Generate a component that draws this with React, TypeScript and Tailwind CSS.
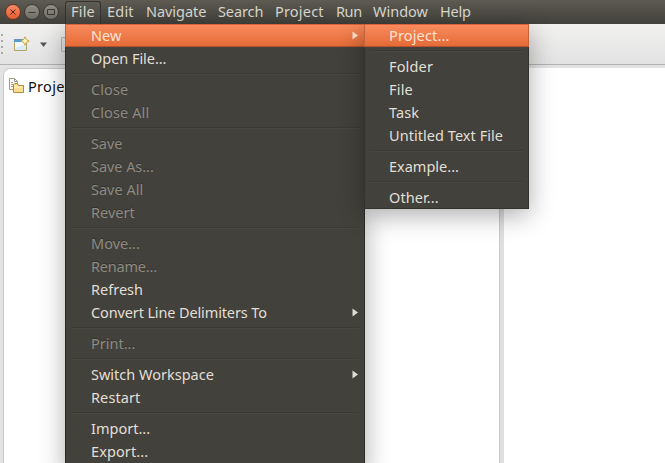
import { ReactNode } from "react";

type Entry = { label: string; tracking?: string; disabled?: boolean; arrow?: boolean; active?: boolean } | null;

const bar = [
  { label: "File", width: "w-9", tracking: "tracking-[0.2px]", open: true },
  { label: "Edit", width: "w-[39px]", tracking: "tracking-[0.2px]" },
  { label: "Navigate", width: "w-[72px]", tracking: "tracking-[-0.05px]" },
  { label: "Search", width: "w-[57px]", tracking: "tracking-[-0.1px]" },
  { label: "Project", width: "w-[61px]", tracking: "tracking-[0.2px]" },
  { label: "Run", width: "w-[37px]", tracking: "tracking-[-0.4px]" },
  { label: "Window", width: "w-[67px]", tracking: "tracking-[0px]" },
  { label: "Help", width: "w-[42px]", tracking: "tracking-[-0.2px]" },
];

const fileMenu: Entry[] = [
  { label: "New", active: true, arrow: true },
  { label: "Open File...", tracking: "tracking-[-0.05px]" },
  null,
  { label: "Close", disabled: true, tracking: "tracking-[0.1px]" },
  { label: "Close All", disabled: true, tracking: "tracking-[0.1px]" },
  null,
  { label: "Save", disabled: true, tracking: "tracking-[-0.1px]" },
  { label: "Save As...", disabled: true, tracking: "tracking-[-0.05px]" },
  { label: "Save All", disabled: true },
  { label: "Revert", disabled: true },
  null,
  { label: "Move...", disabled: true },
  { label: "Rename...", disabled: true, tracking: "tracking-[-0.2px]" },
  { label: "Refresh" },
  { label: "Convert Line Delimiters To", arrow: true, tracking: "tracking-[-0.13px]" },
  null,
  { label: "Print...", disabled: true },
  null,
  { label: "Switch Workspace", arrow: true },
  { label: "Restart", tracking: "tracking-[0.1px]" },
  null,
  { label: "Import..." },
  { label: "Export...", tracking: "tracking-[0.1px]" },
];

const newMenu: Entry[] = [
  { label: "Project...", active: true, tracking: "tracking-[0.15px]" },
  null,
  { label: "Folder", tracking: "tracking-[0.15px]" },
  { label: "File", tracking: "tracking-[0.2px]" },
  { label: "Task", tracking: "tracking-[0.1px]" },
  { label: "Untitled Text File", tracking: "tracking-[0.05px]" },
  null,
  { label: "Example..." },
  null,
  { label: "Other...", tracking: "tracking-[0.1px]" },
];

function Menu({ entries, inset }: { entries: Entry[]; inset: string }) {
  return (
    <>
      {entries.map((e, i) =>
        e === null ? (
          <div key={i} className="h-2 px-[5px] pt-[3px]">
            <div className="h-[2px] border-t border-b border-t-[#3b3a35] border-b-[#484741]" />
          </div>
        ) : (
          <div
            key={i}
            className={`flex h-[23px] items-center justify-between pr-1.5 ${inset} ${
              e.active
                ? "border-t border-b border-t-[#d9623a] border-b-[#b4532d] bg-linear-to-b from-[#f88b5d] to-[#e56b36] text-[#fbe3d3] shadow-[-1px_0_0_#c4623c,1px_0_0_#c4623c]"
                : e.disabled
                  ? "text-[#8d8b83] [text-shadow:0_-1px_0_#32312c]"
                  : "text-[#e2dfd6]"
            }`}
          >
            <span className={`whitespace-nowrap ${e.tracking ?? ""}`}>{e.label}</span>
            {e.arrow && (
              <svg width="6" height="9" viewBox="0 0 6 9">
                <path d="M0.5 0.5 6 4.5 0.5 8.5Z" fill={e.active ? "#fbe3d3" : "#dedcd4"} />
              </svg>
            )}
          </div>
        ),
      )}
    </>
  );
}

function WindowButton({ close, children }: { close?: boolean; children: ReactNode }) {
  return (
    <div
      className={`flex size-4 items-center justify-center rounded-full border ${
        close
          ? "border-[#6b3523] bg-linear-to-b from-[#f58a66] to-[#e25c30]"
          : "border-[#3b3a35] bg-linear-to-b from-[#908e85] to-[#716f67]"
      }`}
    >
      <svg className="shrink-0" width="14" height="14" viewBox="0 0 14 14" fill="none" stroke={close ? "#5a2213" : "#393832"} strokeWidth="1">
        {children}
      </svg>
    </div>
  );
}

export default function App() {
  return (
    <div className="relative flex h-[463px] w-[665px] flex-col overflow-hidden bg-[#e3e3e3] font-['Noto_Sans','Open_Sans',sans-serif] text-[14.5px] leading-none">
      <header className="flex h-6 shrink-0 bg-linear-to-b from-[#5d5b52] to-[#42413b] text-[#dcd9cf]">
        <div className="flex w-[65px] items-center gap-[3px] pb-px pl-[5px]">
          <WindowButton close>
            <path d="m4.5 4.5 5 5m0-5-5 5" />
          </WindowButton>
          <WindowButton>
            <path d="M3.5 7.5h7" />
          </WindowButton>
          <WindowButton>
            <path d="M3.5 4.5h7v5h-7z" />
          </WindowButton>
        </div>
        {bar.map((b) => (
          <div
            key={b.label}
            className={`flex items-center whitespace-nowrap ${b.width} ${b.tracking} ${
              b.open
                ? "mt-px h-[23px] rounded-t-[3px] border border-b-0 border-[#34332e] bg-linear-to-b from-[#5f5d54] to-[#474640] pb-[3px] pl-[5px]"
                : "pb-px pl-1.5"
            }`}
          >
            {b.label}
          </div>
        ))}
      </header>

      <div className="flex h-[41px] shrink-0 items-center border-b border-[#b3b3b3] bg-linear-to-b from-[#f2f1f0] to-[#e2e2e2]">
        <div className="ml-px flex h-[22px] w-1.5 flex-col justify-between py-px">
          {[0, 1, 2, 3].map((n) => (
            <i key={n} className="size-0.5 bg-[#aaa9a6]" />
          ))}
        </div>
        <svg className="ml-[6px]" width="17" height="17" viewBox="0 0 17 17">
          <path d="M1.5 4.5h12v10h-12z" fill="#f1f8fb" stroke="#b5a36c" />
          <path d="M1 3h10v1H1z" fill="#6f93b5" />
          <path d="M1 4h10v2H1z" fill="#4f9fd6" />
          <path d="M2 14v-2l8-3h3v5z" fill="#d9ecf5" />
          <path d="M12 .8 13.4 3.6 16.2 5l-2.8 1.4L12 9.2l-1.4-2.8L7.8 5l2.8-1.4z" fill="#fdf3b8" stroke="#c6a748" strokeWidth="1" />
        </svg>
        <svg className="ml-[10px]" width="7" height="5" viewBox="0 0 7 5">
          <path d="M0 .5h7L3.5 5z" fill="#565656" />
        </svg>
        <div className="ml-[14px] h-[15px] w-4 rounded-[1px] border border-[#b3b7be] bg-[#e3e5e8]" />
      </div>

      <main className="flex min-h-0 flex-1 pl-[3px] pt-[3px]">
        <section className="w-[497px] rounded-tl-[7px] border-l border-t border-r border-[#c9c9c9] bg-white">
          <div className="flex items-center gap-[3px] pl-[5px] pt-[9px] text-[#111]">
            <svg width="16" height="16" viewBox="0 0 16 16">
              <path d="M.5.5h5l3 3v8h-8z" fill="#fffdf2" stroke="#a8986c" />
              <path d="M5.5.5v3h3M2 4.5h2M2 6.5h4M2 8.5h3" fill="none" stroke="#8e9aa8" />
              <path d="M4.5 14.5v-8l1-1h3l1 2h5v7z" fill="#f7df92" stroke="#b08a3a" />
              <path d="M5.5 9h8" stroke="#fff3c4" />
            </svg>
            <span className="whitespace-nowrap tracking-[0.3px]">Proje</span>
          </div>
        </section>
        <div className="w-1 bg-[#dfdfdf]" />
        <section className="flex-1 bg-white" />
      </main>

      <nav className="absolute left-[65px] top-6 h-[450px] w-[300px] border-l border-r border-[#2c2b27] bg-[#42413b] shadow-[0_6px_24px_rgba(0,0,0,0.33)]">
        <Menu entries={fileMenu} inset="pl-[25px]" />
      </nav>
      <nav className="absolute left-[364px] top-6 h-[185px] w-[165px] border-l border-r border-b border-[#33322d] bg-[#42413b] shadow-[0_6px_24px_rgba(0,0,0,0.33)]">
        <Menu entries={newMenu} inset="pl-6" />
      </nav>
    </div>
  );
}
